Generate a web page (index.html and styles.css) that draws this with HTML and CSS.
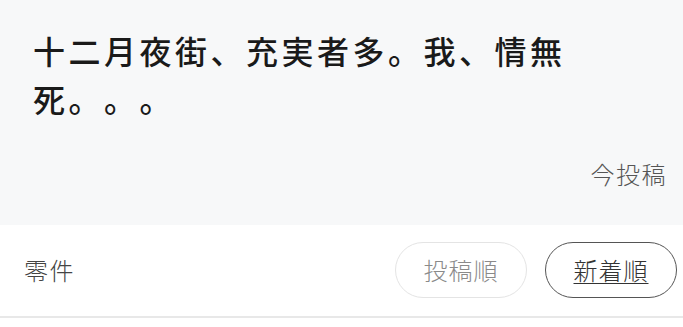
FILE: index.html
```html
<!DOCTYPE html>
<html lang="ja">
<head>
<meta charset="utf-8">
<link rel="stylesheet" href="styles.css">
</head>
<body>
<div class="post">
  <p class="post-text">十二月夜街、充実者多。我、情無死。。。</p>
  <div class="post-date">今投稿</div>
</div>
<div class="bar">
  <div class="count">零件</div>
  <div class="sorts">
    <button class="pill pill-off">投稿順</button>
    <button class="pill pill-on"><span class="u">新着順</span></button>
  </div>
</div>
</body>
</html>
```

FILE: styles.css
```css
html, body {
  margin: 0;
  padding: 0;
  background: #ffffff;
  font-family: "Noto Sans CJK JP", "Noto Sans CJK SC", sans-serif;
  text-spacing-trim: space-all;
}
.post {
  background: #f7f8f9;
  height: 225px;
  box-sizing: border-box;
  padding: 26px 16px 0 33px;
  display: flex;
  flex-direction: column;
}
.post-text {
  margin: 0;
  max-width: 580px;
  font-size: 32px;
  line-height: 48px;
  letter-spacing: 3.5px;
  font-weight: 500;
  color: #1a1a1a;
}
.post-date {
  margin-top: 37px;
  text-align: right;
  font-size: 24px;
  line-height: 30px;
  letter-spacing: 1.5px;
  font-weight: 300;
  color: #555555;
}
.bar {
  height: 93px;
  box-sizing: border-box;
  border-bottom: 2px solid #e8e8e8;
  display: flex;
  align-items: center;
  justify-content: space-between;
  padding: 0 6px 2px 24px;
}
.count {
  font-size: 24px;
  letter-spacing: 1.5px;
  font-weight: 300;
  color: #444444;
}
.sorts {
  display: flex;
  gap: 18px;
}
.pill {
  width: 132px;
  height: 56px;
  box-sizing: border-box;
  border-radius: 28px;
  background: #ffffff;
  font-family: inherit;
  font-size: 24px;
  font-weight: 300;
  letter-spacing: 1px;
  padding: 0;
  display: flex;
  align-items: center;
  justify-content: center;
  text-spacing-trim: space-all;
}
.pill-off {
  border: 1.5px solid #e4e4e4;
  color: #8a8a8a;
}
.pill-on {
  border: 1.5px solid #555555;
  color: #333333;
}
.u {
  text-decoration: underline;
  text-underline-offset: 3px;
  text-decoration-thickness: 1px;
}
```
